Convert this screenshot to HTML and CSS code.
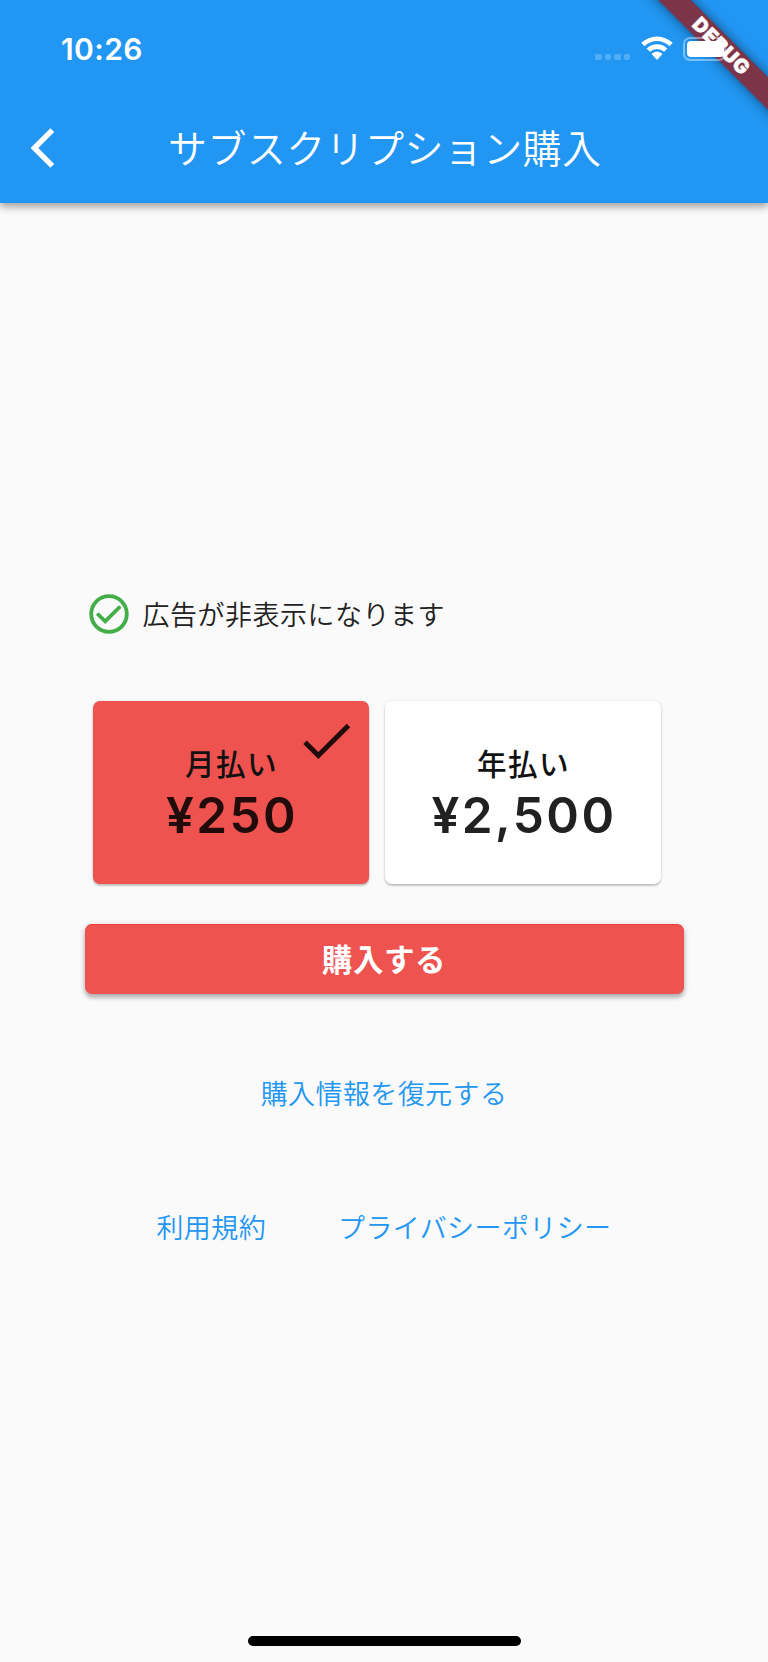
FILE: index.html
```html
<!DOCTYPE html>
<html lang="ja">
<head>
<meta charset="utf-8">
<title>サブスクリプション購入</title>
<link rel="stylesheet" href="styles.css">
</head>
<body>
<div class="screen">
  <header class="appbar">
    <div class="status">
      <span class="time">10:26</span>
      <div class="indicators">
        <div class="dots"><i></i><i></i><i></i><i></i></div>
        <svg class="wifi" width="32" height="25" viewBox="0 0 32 25">
          <path d="M0.3 6.8A22.8 22.8 0 0 1 31.7 6.8L28.6 10.2A18 18 0 0 0 3.4 10.2Z"/>
          <path d="M5.6 12.4A14.8 14.8 0 0 1 26.4 12.4L23.1 15.8A10.4 10.4 0 0 0 8.9 15.8Z"/>
          <path d="M11 18A7.5 7.5 0 0 1 21 18L16 23.4Z" stroke="#fff" stroke-width="1" stroke-linejoin="round"/>
        </svg>
        <div class="battery"><div class="charge"></div></div>
      </div>
    </div>
    <div class="toolbar">
      <svg class="back" width="24" height="40" viewBox="0 0 24 40"><path d="M21.3 2.1L3.4 20L21.3 37.9"/></svg>
      <h1 class="title">サブスクリプション購入</h1>
    </div>
    <div class="debug-clip"><div class="debug">DEBUG</div></div>
  </header>
  <main class="content">
    <div class="benefit">
      <svg class="benefit-icon" width="40" height="40" viewBox="0 0 40 40"><circle cx="20" cy="20" r="17.8"/><path d="M8.2 19.5L16.2 27.3L31.2 12.5"/></svg>
      <span class="benefit-text">広告が非表示になります</span>
    </div>
    <div class="plans">
      <div class="plan selected">
        <span class="plan-name">月払い</span>
        <span class="plan-price">¥250</span>
        <svg class="tick" width="48" height="36" viewBox="0 0 48 36"><path d="M2 19.3L15.3 32.5L45.5 2.4"/></svg>
      </div>
      <div class="plan">
        <span class="plan-name">年払い</span>
        <span class="plan-price">¥2,500</span>
      </div>
    </div>
    <button class="buy">購入する</button>
    <a class="link restore">購入情報を復元する</a>
    <div class="legal">
      <a class="link">利用規約</a>
      <a class="link">プライバシーポリシー</a>
    </div>
  </main>
  <div class="home-bar"></div>
</div>
</body>
</html>
```
FILE: styles.css
```css
* { box-sizing: border-box; }
body { margin: 0; font-family: Inter, "Noto Sans CJK JP", sans-serif; }
.screen { width: 768px; height: 1662px; background: #fafafa; display: flex; flex-direction: column; align-items: center; overflow: hidden; }
.appbar { position: relative; width: 768px; height: 203px; flex: none; background: #2196f3; color: #fff; box-shadow: 0 4px 8px rgba(0,0,0,.24), 0 2px 9px rgba(0,0,0,.2); }
.status { position: relative; z-index: 2; height: 98px; padding: 0 42px 0 61px; display: flex; justify-content: space-between; align-items: center; }
.time { font-size: 30px; font-weight: 600; line-height: 36px; letter-spacing: .4px; }
.indicators { display: flex; align-items: center; }
.dots { display: flex; gap: 3px; margin: 16px 11px 0 0; }
.dots i { width: 6.4px; height: 6.4px; border-radius: 2px; background: rgba(255,255,255,.22); }
.wifi { fill: #fff; margin: 0 10px 2px 0; }
.battery { width: 43px; height: 24px; border: 2px solid rgba(255,255,255,.4); border-radius: 7px; padding: 2px; margin-bottom: 1px; }
.charge { width: 37px; height: 16px; background: #fff; border-radius: 4px; }
.toolbar { height: 100px; display: flex; align-items: center; padding-left: 31px; }
.back { fill: none; stroke: #fff; stroke-width: 5.4; }
.title { margin: 2px 0 0 113px; font-size: 39px; font-weight: 350; letter-spacing: .4px; line-height: 56px; white-space: nowrap; }
.debug-clip { position: absolute; inset: 0; overflow: hidden; z-index: 1; }
.debug { position: absolute; left: 621px; top: 35px; width: 200px; height: 23px; line-height: 23px; transform: rotate(45deg); background: #7c3449; text-align: center; font-size: 19.6px; font-weight: 900; letter-spacing: .8px; -webkit-text-stroke: .5px #fff; box-shadow: 0 0 12px rgba(0,0,0,.5); }
.content { width: 599px; padding-top: 391px; display: flex; flex-direction: column; align-items: center; }
.benefit { align-self: flex-start; display: flex; align-items: center; gap: 14px; height: 40px; margin-left: 4px; }
.benefit-icon { fill: none; stroke: #43ae48; stroke-width: 3.8; }
.benefit-text { font-size: 27px; letter-spacing: .5px; font-weight: 350; line-height: 40px; color: #212121; padding-top: 3px; }
.plans { display: flex; gap: 16px; margin-top: 67px; margin-right: 14px; }
.plan { position: relative; width: 276px; height: 183px; border-radius: 7px; background: #fff; color: #212121; padding-top: 43px; display: flex; flex-direction: column; align-items: center; box-shadow: 0 2px 2px rgba(0,0,0,.2), 0 0 3px rgba(0,0,0,.12); }
.selected { background: #ef5350; color: #210b0b; }
.plan-name { font-size: 29.6px; font-weight: 500; line-height: 41px; letter-spacing: 1.4px; color: #111; padding-left: 1px; }
.plan-price { font-size: 49.5px; font-weight: 600; line-height: 60px; letter-spacing: 2.4px; padding-left: 2px; }
.tick { position: absolute; left: 210px; top: 22px; fill: none; stroke: #210b0b; stroke-width: 5; }
.buy { width: 599px; height: 70px; margin-top: 40px; padding: 0; border: 0; border-top: 1px solid #ee3b36; border-radius: 7px; background: #ef5350; color: #fff; font: 700 30.5px/60px Inter, "Noto Sans CJK JP", sans-serif; letter-spacing: .6px; box-shadow: 0 4px 4px rgba(0,0,0,.22), 0 1px 6px rgba(0,0,0,.16); }
.link { color: #2196f3; font-size: 27px; font-weight: 350; letter-spacing: .4px; line-height: 40px; }
.restore { margin-top: 81px; }
.legal { display: flex; gap: 72px; margin-top: 94px; }
.home-bar { width: 273px; height: 10px; border-radius: 5px; background: #000; margin-top: auto; margin-bottom: 16px; }
```
